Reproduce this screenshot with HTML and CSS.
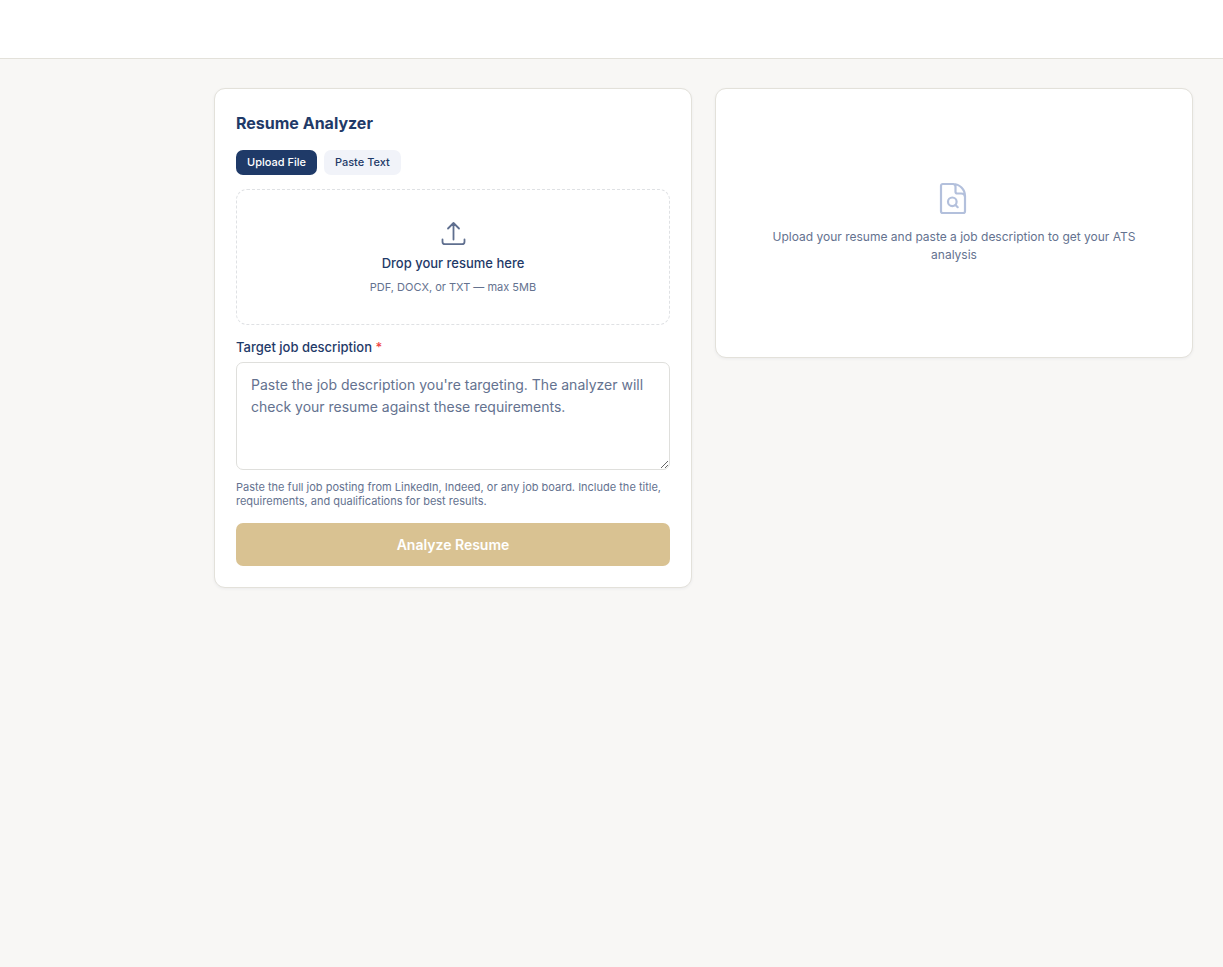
FILE: index.html
```html
<!DOCTYPE html>
<html lang="en">
<head>
<meta charset="utf-8">
<meta name="viewport" content="width=device-width, initial-scale=1">
<title>Resume Analyzer</title>
<link rel="stylesheet" href="styles.css">
</head>
<body>
<header class="topbar"></header>
<main class="content">
  <form class="card analyzer">
    <h1 class="title">Resume Analyzer</h1>
    <div class="tabs">
      <button type="button" class="tab tab-active">Upload File</button>
      <button type="button" class="tab">Paste Text</button>
    </div>
    <button type="button" class="dropzone">
      <svg class="upload-icon" viewBox="0 0 28 28" fill="none" stroke="currentColor" stroke-width="1.8" stroke-linecap="round" stroke-linejoin="round" aria-hidden="true">
        <path d="M14.500 19.500V3M9 8.500 14.500 3l5.500 5.500M3.500 19.500v2.200a2.500 2.500 0 0 0 2.500 2.500h17a2.500 2.500 0 0 0 2.500-2.500v-2.200"/>
      </svg>
      <span class="drop-title">Drop your resume here</span>
      <span class="drop-hint">PDF, DOCX, or TXT — max 5MB</span>
    </button>
    <label class="label" for="job">Target job description <span class="required">*</span></label>
    <textarea class="textarea" id="job" aria-describedby="job-help" placeholder="Paste the job description you're targeting. The analyzer will check your resume against these requirements."></textarea>
    <p class="help" id="job-help">Paste the full job posting from LinkedIn, Indeed, or any job board. Include the title, requirements, and qualifications for best results.</p>
    <button type="submit" class="submit" disabled>Analyze Resume</button>
  </form>
  <section class="card empty">
    <svg class="file-icon" viewBox="0 0 36 36" fill="none" stroke="currentColor" stroke-width="2.2" stroke-linecap="round" stroke-linejoin="round" aria-hidden="true">
      <path d="M17.500 3H6.700A1.700 1.700 0 0 0 5 4.700v25.600a1.700 1.700 0 0 0 1.700 1.700h20.600a1.700 1.700 0 0 0 1.700-1.700V15A12 12 0 0 0 17 3M17 3a2.800 2.800 0 0 1 2.500 2.800v5a1.700 1.700 0 0 0 1.700 1.700h4a3.800 3.800 0 0 1 3.800 3.500"/>
      <circle cx="16.300" cy="20.800" r="4.300"/>
      <path d="m19.500 24 2.200 2.200"/>
    </svg>
    <p class="empty-text">Upload your resume and paste a job description to get your ATS analysis</p>
  </section>
</main>
</body>
</html>
```
FILE: styles.css
```css
* { box-sizing: border-box; }
body {
  margin: 0;
  background: #f8f7f5;
  color: #1f3a68;
  font-family: Inter, "Liberation Sans", sans-serif;
}
button, textarea { font-family: inherit; }
.topbar {
  height: 59px;
  background: #fff;
  border-bottom: 1px solid #e3e1da;
}
.content {
  display: grid;
  grid-template-columns: 1fr 1fr;
  align-items: start;
  gap: 23px;
  padding: 29px 30px 29px 214px;
}
.card {
  background: #fff;
  border: 1px solid #e3e1da;
  border-radius: 11px;
  box-shadow: 0 1px 3px rgba(31, 58, 104, 0.06);
}
.analyzer {
  display: flex;
  flex-direction: column;
  padding: 21px;
}
.title {
  margin: 0 0 14px;
  font-size: 16px;
  line-height: 26px;
  font-weight: 700;
}
.tabs {
  display: flex;
  gap: 7px;
  margin-bottom: 14px;
}
.tab {
  padding: 0 11px;
  border: 0;
  border-radius: 7px;
  background: #f1f3f9;
  color: #1f3a68;
  font-size: 11px;
  line-height: 25px;
  font-weight: 500;
}
.tab-active {
  background: #1f3a68;
  color: #fff;
}
.dropzone {
  display: flex;
  flex-direction: column;
  align-items: center;
  padding: 30px 21px 28px;
  border: 1px dashed #dfe1e4;
  border-radius: 11px;
  background: #fff;
}
.upload-icon {
  width: 28px;
  height: 28px;
  margin-bottom: 5px;
  color: #5f6f8f;
}
.drop-title {
  margin-bottom: 5px;
  color: #1f3a68;
  font-size: 13px;
  line-height: 20px;
  font-weight: 500;
}
.drop-hint {
  color: #64728f;
  font-size: 11px;
  line-height: 18px;
}
.label {
  margin: 13px 0 5px;
  font-size: 13px;
  line-height: 19px;
  font-weight: 500;
}
.required { color: #ef4444; }
.textarea {
  display: block;
  width: 100%;
  height: 108px;
  padding: 11px 14px;
  border: 1px solid #dfdfdc;
  border-radius: 7px;
  background: #fff;
  color: #1f3a68;
  font-size: 14px;
  line-height: 22px;
  resize: vertical;
}
.textarea::placeholder { color: #64728f; }
.help {
  margin: 10px 0 15px;
  color: #64728f;
  font-size: 11px;
  line-height: 14px;
}
.submit {
  padding: 0 22px;
  border: 0;
  border-radius: 7px;
  background: #d9c292;
  color: #fff;
  font-size: 14px;
  line-height: 43px;
  font-weight: 600;
}
.empty {
  display: flex;
  flex-direction: column;
  align-items: center;
  padding: 92px 43px 93px;
}
.file-icon {
  width: 36px;
  height: 36px;
  margin-bottom: 11px;
  color: #b3c0dc;
}
.empty-text {
  margin: 0;
  color: #64728f;
  font-size: 12px;
  line-height: 18px;
  text-align: center;
}
```
